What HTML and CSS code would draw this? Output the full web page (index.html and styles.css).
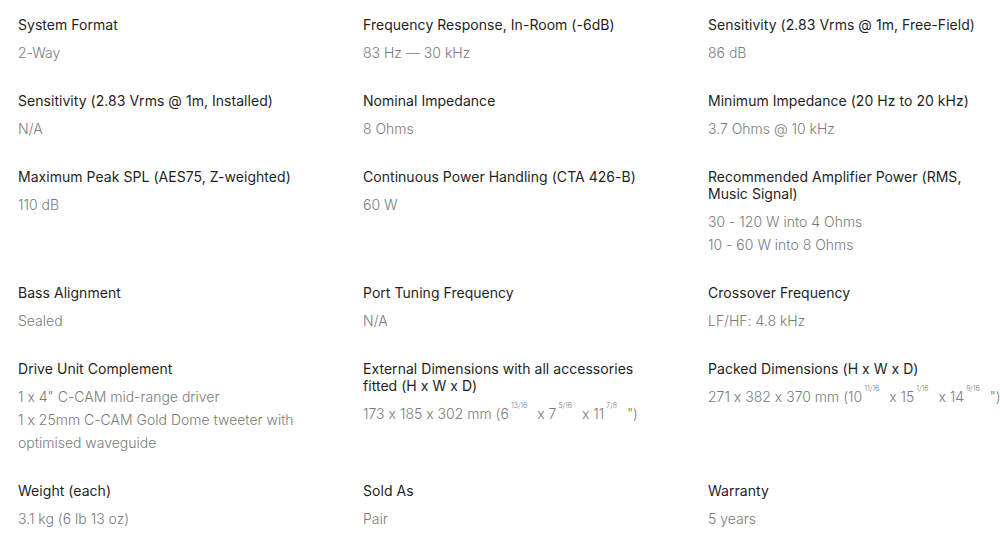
FILE: index.html
```html
<!DOCTYPE html>
<html>
<head>
<meta charset="utf-8">
<link rel="stylesheet" href="styles.css">
</head>
<body>
<div class="specs">
  <div class="spec"><div class="label">System Format</div><div class="value">2-Way</div></div>
  <div class="spec"><div class="label">Frequency Response, In-Room (-6dB)</div><div class="value">83 Hz — 30 kHz</div></div>
  <div class="spec"><div class="label">Sensitivity (2.83 Vrms @ 1m, Free-Field)</div><div class="value">86 dB</div></div>

  <div class="spec"><div class="label">Sensitivity (2.83 Vrms @ 1m, Installed)</div><div class="value">N/A</div></div>
  <div class="spec"><div class="label">Nominal Impedance</div><div class="value">8 Ohms</div></div>
  <div class="spec"><div class="label">Minimum Impedance (20 Hz to 20 kHz)</div><div class="value">3.7 Ohms @ 10 kHz</div></div>

  <div class="spec"><div class="label">Maximum Peak SPL (AES75, Z-weighted)</div><div class="value">110 dB</div></div>
  <div class="spec"><div class="label">Continuous Power Handling (CTA 426-B)</div><div class="value">60 W</div></div>
  <div class="spec"><div class="label">Recommended Amplifier Power (RMS, Music Signal)</div><div class="value">30 - 120 W into 4 Ohms<br>10 - 60 W into 8 Ohms</div></div>

  <div class="spec"><div class="label">Bass Alignment</div><div class="value">Sealed</div></div>
  <div class="spec"><div class="label">Port Tuning Frequency</div><div class="value">N/A</div></div>
  <div class="spec"><div class="label">Crossover Frequency</div><div class="value">LF/HF: 4.8 kHz</div></div>

  <div class="spec"><div class="label">Drive Unit Complement</div><div class="value">1 x 4" C-CAM mid-range driver<br>1 x 25mm C-CAM Gold Dome tweeter with optimised waveguide</div></div>
  <div class="spec"><div class="label">External Dimensions with all accessories fitted (H x W x D)</div><div class="value">173 x 185 x 302 mm (6<sup>13/16</sup> x 7<sup>5/16</sup> x 11<sup>7/8</sup> ")</div></div>
  <div class="spec"><div class="label">Packed Dimensions (H x W x D)</div><div class="value">271 x 382 x 370 mm (10<sup>11/16</sup> x 15<sup>1/16</sup> x 14<sup>9/16</sup> ")</div></div>

  <div class="spec"><div class="label">Weight (each)</div><div class="value">3.1 kg (6 lb 13 oz)</div></div>
  <div class="spec"><div class="label">Sold As</div><div class="value">Pair</div></div>
  <div class="spec"><div class="label">Warranty</div><div class="value">5 years</div></div>
</div>
</body>
</html>
```
FILE: styles.css
```css
html, body {
  margin: 0;
  padding: 0;
  background: #ffffff;
}
body {
  font-family: Inter, "Noto Sans", sans-serif;
  font-size: 14px;
  font-feature-settings: "calt" 0;
}
.specs {
  display: grid;
  grid-template-columns: repeat(3, 295px);
  column-gap: 50px;
  row-gap: 28px;
  padding: 16px 0 0 18px;
}
.spec {
  display: flex;
  flex-direction: column;
  gap: 8px;
}
.label {
  color: #1f1f1f;
  line-height: 17px;
  letter-spacing: 0.04px;
}
.value {
  color: #7b7b7b;
  line-height: 23px;
  font-weight: 300;
}
.value sup {
  font-size: 7px;
  vertical-align: 11px;
  line-height: 0;
  margin: 0 6px 0 2px;
}
```
